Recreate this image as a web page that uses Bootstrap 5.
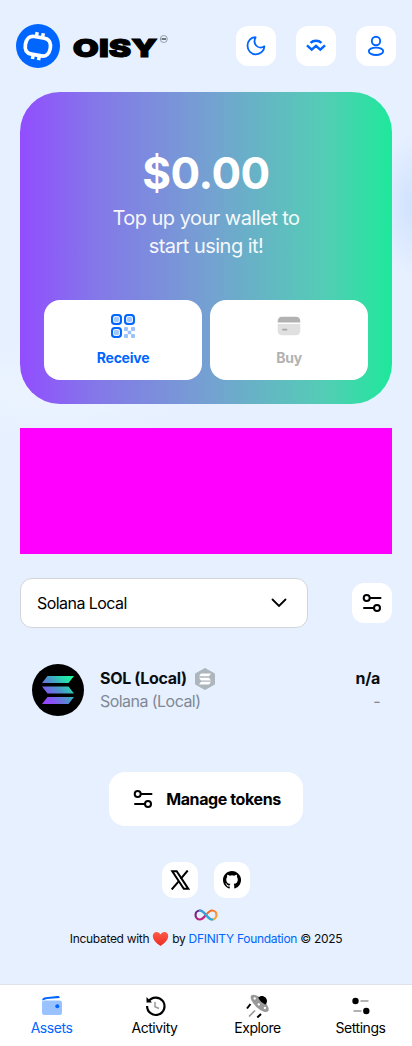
<!DOCTYPE html>
<html lang="en">
<head>
<meta charset="utf-8">
<meta name="viewport" content="width=device-width, initial-scale=1">
<title>OISY Wallet</title>
<link href="https://cdn.jsdelivr.net/npm/bootstrap@5.3.0/dist/css/bootstrap.min.css" rel="stylesheet">
<style>
body{font-family:"Inter","Liberation Sans",sans-serif;color:#0b0d0f;background:radial-gradient(ellipse 36px 70px at 412px 205px,#d0e2ff,transparent),radial-gradient(ellipse 160px 50px at 50px 390px,#ecf4ff,transparent),#e6f0ff;height:1046px;overflow:hidden}
svg{display:block;flex:none}
a{text-decoration:none}
.topbar{height:92px;padding:0 16px}
.tools{gap:20px}
.tile{width:40px;height:40px;border-radius:12px;background:#fff;border:0;padding:0;display:flex;align-items:center;justify-content:center;color:#0066ff}
.tile-sm{width:36px;height:36px;color:#000}
.hero{height:312px;margin:0 20px;border-radius:40px;padding:55px 24px 24px;background:linear-gradient(90deg,#924dff 0%,#8477e9 20%,#75a0d2 50%,#53cdb5 82%,#1ee89b 100%);color:#fff}
.balance{font-size:44px;line-height:52px;font-weight:700;letter-spacing:-.5px}
.prompt{font-size:20px;line-height:28px;margin-top:5px;letter-spacing:-.53px;opacity:.93}
.action{height:80px;border-radius:16px;background:#fff;border:0;padding:1px 0 0;font-size:14px;line-height:20px;font-weight:700;color:#0066ff;letter-spacing:-.25px}
.action svg{margin:0 auto 10px}
.action.off{color:#b2b2b2}
.promo{height:126px;margin:24px 20px;background:#f0f}
.filters{margin:0 20px}
.network{width:288px;height:50px;border:1px solid #d3d5d8;border-radius:12px;background:#fff;padding:0 16px;font-size:16px;letter-spacing:-.55px}
.token{height:52px;margin:36px 32px 0;line-height:23px;font-size:16px}
.symbol{gap:8px;letter-spacing:-.32px}
.muted{color:#808895;letter-spacing:-.55px}
.manage{width:194px;height:54px;border:0;border-radius:16px;background:#fff;font-size:16px;font-weight:700;gap:13px;margin-top:56px;padding-left:8px;letter-spacing:-.4px}
.foot{margin-top:36px}
.loop{margin:11px 0 8px}
.credit{font-size:12px;line-height:20px;white-space:nowrap;letter-spacing:-.3px}
.credit svg{margin:0 3px}
.credit a{color:#0066ff}
.tabs{height:62px;background:#fff;border-top:1px solid #dfe3e9;font-size:14px;line-height:18px;letter-spacing:-.45px}
.tabs a{flex:1;color:#000;text-align:center;padding-top:9px}
.tabs svg{margin:0 auto 1px}
.tabs a.active{color:#0066ff}
</style>
</head>
<body>
<svg width="0" height="0" class="position-absolute">
<defs>
<linearGradient id="sol" gradientUnits="userSpaceOnUse" x1="11" y1="39" x2="39" y2="12"><stop stop-color="#9945ff"/><stop offset=".2" stop-color="#8752f3"/><stop offset=".55" stop-color="#4898c8"/><stop offset=".8" stop-color="#28d7b0"/><stop offset="1" stop-color="#19fb9b"/></linearGradient>
<linearGradient id="warm" x1="0" x2="1" y1="0" y2="1"><stop stop-color="#f15a24"/><stop offset="1" stop-color="#fbb03b"/></linearGradient>
<linearGradient id="cool" x1="0" x2="1" y1="0" y2="1"><stop stop-color="#522785"/><stop offset="1" stop-color="#ed1e79"/></linearGradient>
<linearGradient id="heart" x2="0" y2="1"><stop stop-color="#ff5a47"/><stop offset="1" stop-color="#ea2b25"/></linearGradient>
<symbol id="sliders" viewBox="0 0 20 20"><g fill="none" stroke="#000" stroke-width="2" stroke-linecap="round"><circle cx="4.700" cy="5" r="3"/><path d="M8 5h10.500M2 15h9.500"/><circle cx="15" cy="15" r="3"/></g></symbol>
</defs>
</svg>
<div class="d-flex flex-column h-100">
<header class="topbar d-flex align-items-center justify-content-between">
<a href="#" aria-label="OISY">
<svg width="156" height="44" viewBox="0 0 156 44"><circle cx="22" cy="22" r="22" fill="#0066ff"/>
<g transform="rotate(10 22 22)" fill="none" stroke="#fff"><path d="M17 13.200H27C32.500 13.200 34.500 17.500 34.500 22.300S32 31.200 27 31.200H17C11.500 31.200 9.300 27.500 9.300 22.300S11.500 13.200 17 13.200Z" stroke-width="3.700"/><path d="M18.800 8.500v4M25 8.500v4M18.800 31.500v4.300M25 31.500v4.300" stroke-width="3.500"/></g>
<text x="56.800" y="33.200" font-family="Inter" font-size="25" font-weight="900" textLength="84.500" lengthAdjust="spacingAndGlyphs" stroke="#000" stroke-width="1">OISY</text>
<circle cx="147.800" cy="15" r="3.500" fill="none" stroke="#717983" stroke-width=".7"/><path d="M145.600 14h4.400v2h-4.400Z" fill="#6d747c"/></svg></a>
<div class="tools d-flex">
<button class="tile" aria-label="Theme"><svg width="20" height="20" viewBox="0 0 20 20"><path d="M9.600 1.300C5 .9 1.500 4.900 1.500 9.800c0 4.800 3.800 8.500 8.300 8.500 4.600 0 8.600-3.600 8.600-8-2.700 1.900-6.300 1.400-8.300-.8-2.100-2.400-1.900-5.500-.5-8.200Z" fill="none" stroke="currentColor" stroke-width="1.800" stroke-linejoin="round"/></svg></button>
<button class="tile" aria-label="WalletConnect"><svg width="22" height="16" viewBox="0 0 22 16"><path d="M2 7.300 6.700 11.700 11 7.800l4.300 3.900L20 7.300M5.500 4.800C8.500 2 13.500 2 16.500 4.800" fill="none" stroke="currentColor" stroke-width="2.400"/></svg></button>
<button class="tile" aria-label="Account"><svg width="20" height="22" viewBox="0 0 20 22"><g fill="none" stroke="currentColor" stroke-width="1.900"><circle cx="10" cy="6" r="4.200"/><ellipse cx="10" cy="16.300" rx="7.200" ry="3.700"/></g></svg></button>
</div>
</header>
<section class="hero d-flex flex-column text-center">
<div class="balance">$0.00</div>
<div class="prompt">Top up your wallet to<br>start using it!</div>
<div class="d-flex gap-2 mt-auto">
<button class="action flex-fill w-50"><svg width="24" height="24" viewBox="0 0 24 24"><g fill="#a3c8ff" stroke="#0066ff" stroke-width="2"><rect x="1" y="1" width="9" height="9" rx="2.800"/><rect x="14" y="1" width="9" height="9" rx="2.800"/><rect x="1" y="14" width="9" height="9" rx="2.800"/></g><g fill="none" stroke="#fff" stroke-width=".8"><rect x="2.500" y="2.500" width="6" height="6" rx="2"/><rect x="15.500" y="2.500" width="6" height="6" rx="2"/><rect x="2.500" y="15.500" width="6" height="6" rx="2"/></g><g fill="#99c2ff"><rect x="13" y="13" width="4" height="4" rx="1"/><rect x="20" y="13" width="4" height="4" rx="1"/><rect x="16.700" y="16.700" width="3.600" height="3.600" rx=".8"/><rect x="13" y="20" width="4" height="4" rx="1"/><rect x="20" y="20" width="4" height="4" rx="1"/></g></svg><span>Receive</span></button>
<button class="action off flex-fill w-50"><svg width="24" height="24" viewBox="0 0 24 24"><path d="M.7 7.500C.7 4.500 2.200 2.800 5 2.800h14c2.800 0 4.300 1.700 4.300 4.700V8.500H.7Z" fill="#b2b2b2"/><path d="M.7 10h22.600v6.500c0 3-1.500 4.700-4.300 4.700H5c-2.800 0-4.300-1.700-4.300-4.700Z" fill="#e0e0e0"/><path d="M6 15.700h3.500" stroke="#a5a5a5" stroke-width="1.700" stroke-linecap="round"/></svg><span>Buy</span></button>
</div>
</section>
<div class="promo"></div>
<div class="filters d-flex align-items-center justify-content-between">
<button class="network d-flex align-items-center justify-content-between"><span>Solana Local</span><svg width="24" height="20" viewBox="0 0 24 20"><path d="m5.500 6.500 6.500 6.500 6.500-6.500" fill="none" stroke="#000" stroke-width="1.800" stroke-linecap="round"/></svg></button>
<button class="tile" aria-label="Filter"><svg width="20" height="20"><use href="#sliders"/></svg></button>
</div>
<div class="token d-flex align-items-center">
<svg width="52" height="52" viewBox="0 0 52 52"><circle cx="26" cy="26" r="26"/><path d="M15.500 12H42l-5.500 7H10ZM10 22.500h26.500l5.500 7H15.500ZM15.500 33H42l-5.500 7H10Z" fill="url(#sol)"/></svg>
<div class="ms-3"><div class="symbol d-flex align-items-center fw-bold"><span>SOL (Local)</span><svg width="20" height="22" viewBox="0 0 20 22"><path d="m10 .5 9.500 5.300v10.400L10 21.500.5 16.200V5.800Z" fill="#adb5bd" stroke="#adb5bd" stroke-linejoin="round"/><path d="M6 5.500h10l-2 2.800H4ZM4 9.700h10l2 2.700H6ZM6 13.800h10l-2 2.700H4Z" fill="#fff"/></svg></div><div class="muted">Solana (Local)</div></div>
<div class="ms-auto text-end"><div class="symbol fw-bold">n/a</div><div class="muted">-</div></div>
</div>
<button class="manage d-flex align-items-center justify-content-center mx-auto"><svg width="20" height="20"><use href="#sliders"/></svg><span>Manage tokens</span></button>
<footer class="foot d-flex flex-column align-items-center">
<div class="d-flex gap-3">
<a class="tile tile-sm" href="#" aria-label="X"><svg width="20" height="20" viewBox="0 0 20 20"><path d="M2.300 1.300h4.400l11.500 17.400h-4.400Z" fill="none" stroke="#000" stroke-width="2"/><path d="m17.700.5-7 8.300M8.900 11.200l-7.200 8.300" stroke="#000" stroke-width="2"/></svg></a>
<a class="tile tile-sm" href="#" aria-label="GitHub"><svg width="18" height="18" viewBox="0 0 16 16"><path d="M8 0C3.580 0 0 3.580 0 8c0 3.540 2.290 6.530 5.470 7.590.4.070.55-.17.55-.38 0-.19-.01-.82-.01-1.490-2.010.37-2.530-.49-2.690-.94-.09-.23-.48-.94-.82-1.130-.28-.15-.68-.52-.01-.53.63-.01 1.080.58 1.230.82.72 1.210 1.870.87 2.330.66.07-.52.28-.87.51-1.070-1.780-.2-3.640-.89-3.640-3.950 0-.87.31-1.590.82-2.150-.08-.2-.36-1.020.08-2.120 0 0 .67-.21 2.200.82a7.700 7.700 0 0 1 4 0c1.530-1.040 2.200-.82 2.200-.82.44 1.100.16 1.920.08 2.120.51.56.82 1.270.82 2.150 0 3.070-1.870 3.750-3.650 3.950.29.25.54.73.54 1.480 0 1.070-.01 1.930-.01 2.200 0 .21.15.46.55.38A8 8 0 0 0 8 0Z"/></svg></a>
</div>
<svg class="loop" width="24" height="12" viewBox="0 0 24 12"><g fill="none" stroke-width="2.200"><path d="M12 6C9.500 3 8 1.500 6 1.500a4.500 4.500 0 0 0 0 9C8 10.500 9.500 9 12 6" stroke="url(#cool)"/><path d="M12 6c2.500-3 4-4.500 6-4.500a4.500 4.500 0 0 1 0 9c-2 0-3.500-1.500-6-4.500" stroke="url(#warm)"/><path d="M5 1.600c3.500-.8 5 2.200 7 4.400s4 5.300 7 4.400" stroke="#29abe2"/></g></svg>
<div class="credit d-flex align-items-center"><span>Incubated with</span><svg width="17" height="16" viewBox="0 0 16 16"><path d="M8 15C3.500 12 .3 8.600.3 5 .3 2.700 1.900 1 4.100 1 5.800 1 7.200 1.900 8 3.500 8.800 1.900 10.200 1 11.900 1c2.200 0 3.800 1.700 3.800 4 0 3.600-3.200 7-7.700 10Z" fill="url(#heart)"/></svg><span>by <a href="#">DFINITY Foundation</a> © 2025</span></div>
</footer>
<nav class="tabs d-flex mt-auto">
<a class="active" href="#"><svg width="24" height="24" viewBox="0 0 24 24"><rect x="2" y="6.500" width="20" height="14.500" rx="2.500" fill="#99c2ff"/><path d="M2 6.500C2.500 4 3.500 3.500 6 3.200L17 2c2-.2 2.700.4 2.800 2L7 5 2 6.500Z" fill="#0066ff"/><circle cx="17.300" cy="12.200" r="2" fill="#0066ff"/></svg><span>Assets</span></a>
<a href="#"><svg width="24" height="24" viewBox="0 0 24 24"><path d="M5.500 7.500a8.700 8.700 0 1 1-1.400 4.500" fill="none" stroke="#000" stroke-width="2.200"/><path d="M3.500 3v5.500H9Z"/><path d="M12 8v4.800l4 1.700" fill="none" stroke="#999" stroke-width="1.500"/></svg><span>Activity</span></a>
<a href="#"><svg width="24" height="24" viewBox="0 0 24 24"><g transform="rotate(43 14 9)"><ellipse cx="14" cy="9.500" rx="11.500" ry="4.800" fill="#999"/><path d="M9 6.300C9-.5 19-.5 19 6.300q-5 2-10 0Z"/><g fill="#fff"><circle cx="7" cy="9.300" r="1.200"/><circle cx="14" cy="10.800" r="1.200"/><circle cx="21" cy="9.300" r="1.200"/></g></g><path d="m4.500 10-3.500 4.500M15 20l-3.700 3.500" stroke="#000" stroke-width="2"/><path d="m9 16.500-6 6" stroke="#999" stroke-width="1.700"/></svg><span>Explore</span></a>
<a href="#"><svg width="24" height="24" viewBox="0 0 24 24"><circle cx="6.500" cy="7" r="3.200"/><circle cx="17.300" cy="17" r="3.200"/><path d="M11.500 7h8M4.500 17h8" stroke="#999" stroke-width="1.500"/></svg><span>Settings</span></a>
</nav>
</div>
<script src="https://cdn.jsdelivr.net/npm/bootstrap@5.3.0/dist/js/bootstrap.bundle.min.js"></script>
</body>
</html>
